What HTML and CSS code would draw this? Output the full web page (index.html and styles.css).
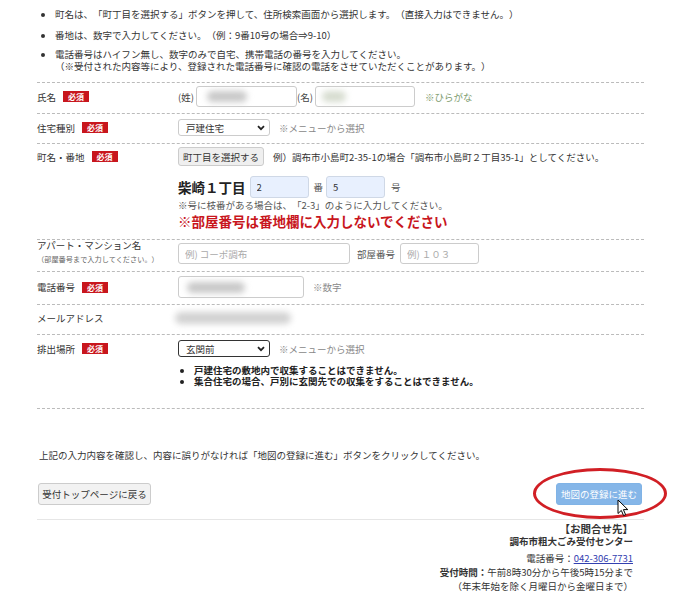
FILE: index.html
```html
<!DOCTYPE html>
<html lang="ja">
<head>
<meta charset="UTF-8">
<meta name="viewport" content="width=device-width, initial-scale=1.0">
<title>粗大ごみ受付 申込内容の入力</title>
<link rel="stylesheet" href="styles.css">
</head>
<body>
<div class="page">
  <ul class="notes">
    <li>町名は、「町丁目を選択する」ボタンを押して、住所検索画面から選択します。（直接入力はできません。）</li>
    <li>番地は、数字で入力してください。（例：9番10号の場合⇒9-10）</li>
    <li>電話番号はハイフン無し、数字のみで自宅、携帯電話の番号を入力してください。<br>（※受付された内容等により、登録された電話番号に確認の電話をさせていただくことがあります。）</li>
  </ul>

  <div class="form">
    <!-- 氏名 -->
    <div class="row row-name">
      <div class="label">氏名<span class="req">必須</span></div>
      <div class="field">
        <div class="line">
          <span class="pre">(姓)</span>
          <div class="input input-sei"><span class="blur blur-sei"></span></div>
          <span class="pre">(名)</span>
          <div class="input input-mei"><span class="blur blur-mei"></span></div>
          <span class="hint hint-green">※ひらがな</span>
        </div>
      </div>
    </div>

    <!-- 住宅種別 -->
    <div class="row row-select">
      <div class="label">住宅種別<span class="req">必須</span></div>
      <div class="field">
        <div class="line">
          <div class="select">
            <span>戸建住宅</span>
            <svg width="8" height="6" viewBox="0 0 8 6"><path d="M1 1.2 L4 4.2 L7 1.2" fill="none" stroke="#222" stroke-width="1.8"/></svg>
          </div>
          <span class="hint">※メニューから選択</span>
        </div>
      </div>
    </div>

    <!-- 町名・番地 -->
    <div class="row row-address">
      <div class="label">町名・番地<span class="req">必須</span></div>
      <div class="field">
        <div class="line">
          <button class="btn btn-town">町丁目を選択する</button>
          <span class="example">例）調布市小島町2-35-1の場合「調布市小島町２丁目35-1」としてください。</span>
        </div>
        <div class="line line-banchi">
          <span class="town">柴崎１丁目</span>
          <input class="input input-filled input-ban" type="text" value="2">
          <span class="unit">番</span>
          <input class="input input-filled input-go" type="text" value="5">
          <span class="unit">号</span>
        </div>
        <p class="sub-note">※号に枝番がある場合は、「2-3」のように入力してください。</p>
        <p class="warning">※部屋番号は番地欄に入力しないでください</p>
      </div>
    </div>

    <!-- アパート・マンション名 -->
    <div class="row row-apart">
      <div class="label label-apart">
        <span>アパート・マンション名</span>
        <small>（部屋番号まで入力してください。）</small>
      </div>
      <div class="field">
        <div class="line">
          <input class="input input-apart" type="text" placeholder="例) コーポ調布">
          <span class="room-label">部屋番号</span>
          <input class="input input-room" type="text" placeholder="例) １０３">
        </div>
      </div>
    </div>

    <!-- 電話番号 -->
    <div class="row row-tel">
      <div class="label">電話番号<span class="req">必須</span></div>
      <div class="field">
        <div class="line">
          <div class="input input-tel"><span class="blur blur-tel"></span></div>
          <span class="hint">※数字</span>
        </div>
      </div>
    </div>

    <!-- メールアドレス -->
    <div class="row row-mail">
      <div class="label">メールアドレス</div>
      <div class="field">
        <div class="line">
          <span class="blur blur-mail"></span>
        </div>
      </div>
    </div>

    <!-- 排出場所 -->
    <div class="row row-place">
      <div class="label">排出場所<span class="req">必須</span></div>
      <div class="field">
        <div class="line">
          <div class="select select-focus">
            <span>玄関前</span>
            <svg width="8" height="6" viewBox="0 0 8 6"><path d="M1 1.2 L4 4.2 L7 1.2" fill="none" stroke="#222" stroke-width="1.8"/></svg>
          </div>
          <span class="hint">※メニューから選択</span>
        </div>
        <ul class="place-notes">
          <li>戸建住宅の敷地内で収集することはできません。</li>
          <li>集合住宅の場合、戸別に玄関先での収集をすることはできません。</li>
        </ul>
      </div>
    </div>
  </div>

  <p class="confirm">上記の入力内容を確認し、内容に誤りがなければ「地図の登録に進む」ボタンをクリックしてください。</p>

  <div class="actions">
    <button class="btn btn-back">受付トップページに戻る</button>
    <div class="next-wrap">
      <button class="btn btn-next">地図の登録に進む</button>
      <span class="circle-mark"></span>
      <svg class="cursor" width="12" height="18" viewBox="0 0 12 18">
        <path d="M1 1 L1 14.5 L4.3 11.4 L6.6 16.6 L8.6 15.7 L6.4 10.6 L10.8 10.6 Z" fill="#fff" stroke="#000" stroke-width="1" stroke-linejoin="round"/>
      </svg>
    </div>
  </div>

  <div class="contact">
    <p class="contact-title">【お問合せ先】</p>
    <p class="contact-name">調布市粗大ごみ受付センター</p>
    <p class="contact-tel">電話番号：<a href="#">042-306-7731</a></p>
    <p><b>受付時間：</b>午前8時30分から午後5時15分まで</p>
    <p>（年末年始を除く月曜日から金曜日まで）</p>
  </div>
</div>
</body>
</html>
```

FILE: styles.css
```css
body {
  margin: 0;
  background-color: #fff;
  color: #333;
  font-family: "Noto Sans CJK JP", "Noto Sans", sans-serif;
  font-size: 9.5px;
  text-spacing-trim: space-all;
}

p {
  margin: 0;
}

.page {
  width: 607px;
  margin-left: 37px;
}

/* top notes */
.notes {
  margin: 0;
  padding: 8px 0 0 18px;
  line-height: 12px;
}

.notes li + li {
  margin-top: 9px;
}

.notes li:last-child {
  margin-top: 8px;
  line-height: 11.5px;
}

/* form rows */
.form {
  margin-top: 10px;
  border-bottom: 1px dashed #bbb;
}

.row {
  display: flex;
  border-top: 1px dashed #bbb;
}

.label {
  width: 141px;
  flex: none;
  display: flex;
  align-items: center;
  color: #333;
}

.req {
  display: inline-block;
  margin-left: 7px;
  padding: 0 5px;
  height: 11px;
  line-height: 11px;
  background-color: #c8161d;
  color: #fff;
  font-size: 8px;
  font-weight: bold;
}

.field {
  flex: 1;
}

.line {
  display: flex;
  align-items: center;
  white-space: nowrap;
}

.input {
  box-sizing: border-box;
  height: 21px;
  margin: 0;
  padding: 0 6px;
  border: 1px solid #ccc;
  border-radius: 3px;
  background-color: #fff;
  font-family: inherit;
  font-size: 9.5px;
  color: #333;
  display: flex;
  align-items: center;
}

.input::placeholder {
  color: #aaa;
}

.input-filled {
  height: 22px;
  background-color: #e8f0fe;
  border-color: #cfd8e6;
}

.blur {
  display: block;
  height: 11px;
  border-radius: 6px;
  background-color: #c8c8c8;
  filter: blur(3px);
}

.pre {
  padding-right: 2px;
  color: #444;
}

.hint {
  margin-left: 9px;
  color: #888;
}

.hint-green {
  margin-left: 10px;
  color: #7c9a6c;
}

/* row: 氏名 */
.row-name {
  padding: 3px 0 6px;
}

.row-name .label {
  height: 21px;
}

.input-sei {
  width: 101px;
}

.input-mei {
  width: 100px;
}

.blur-sei {
  width: 40px;
  margin-left: 4px;
}

.blur-mei {
  width: 24px;
  background-color: #d6dccf;
}

/* row: select */
.select {
  box-sizing: border-box;
  width: 92px;
  height: 17px;
  padding: 0 4px 0 7px;
  border: 1px solid #ccc;
  border-radius: 3px;
  display: flex;
  align-items: center;
  justify-content: space-between;
  color: #333;
}

.select-focus {
  border: 1.5px solid #333;
}

.row-select {
  padding: 5px 0 7px;
}

.row-select .label {
  height: 17px;
}

/* row: 町名・番地 */
.row-address {
  padding: 3px 0 8px;
}

.row-address .label {
  height: 19px;
}

.btn {
  box-sizing: border-box;
  margin: 0;
  padding: 0;
  border: 1px solid #ccc;
  border-radius: 3px;
  background-color: #efefef;
  color: #333;
  font-family: inherit;
  font-size: 9.5px;
  white-space: nowrap;
  cursor: pointer;
}

.btn-town {
  width: 86px;
  height: 19px;
}

.example {
  margin-left: 9px;
}

.line-banchi {
  margin-top: 10px;
}

.town {
  font-size: 13.5px;
  font-weight: bold;
  color: #222;
  line-height: 22px;
  margin-right: 4px;
}

.input-ban {
  width: 59px;
}

.input-go {
  width: 59px;
}

.unit {
  margin: 0 4px 0 6px;
  color: #555;
}

.input-ban + .unit {
  margin: 0 3px 0 5px;
}

.sub-note {
  margin-top: 1px;
  line-height: 13px;
  color: #555;
}

.warning {
  line-height: 19px;
  font-size: 13.5px;
  font-weight: bold;
  color: #c8161d;
}

/* row: アパート */
.row-apart {
  padding: 3px 0 5px;
}

.label-apart {
  flex-direction: column;
  align-items: flex-start;
  margin-top: -4px;
}

.label-apart span {
  line-height: 13px;
  color: #333;
}

.label-apart small {
  font-size: 7.2px;
  line-height: 14px;
  color: #666;
}

.input-apart {
  width: 172px;
}

.room-label {
  margin: 0 5px 0 7px;
  color: #555;
}

.input-room {
  width: 79px;
}

/* row: 電話番号 */
.row-tel {
  padding: 4px 0 6px;
}

.row-tel .label {
  height: 22px;
}

.input-tel {
  width: 126px;
  height: 22px;
}

.blur-tel {
  width: 58px;
  margin-left: 2px;
}

/* row: メールアドレス */
.row-mail {
  padding: 3px 0 6px;
}

.row-mail .label,
.row-mail .line {
  height: 20px;
}

.blur-mail {
  width: 116px;
  height: 12px;
  margin-left: -3px;
  background-color: #d2d2d2;
}

/* row: 排出場所 */
.row-place {
  padding: 5px 0 21px;
}

.row-place .label {
  height: 17px;
}

.place-notes {
  margin: 7px 0 0;
  padding-left: 16px;
  line-height: 12px;
  font-weight: bold;
  color: #222;
}

.place-notes li + li {
  margin-top: -1px;
}

/* bottom */
.confirm {
  margin-top: 39px;
  line-height: 14px;
  padding-left: 2px;
}

.actions {
  margin-top: 21px;
  padding: 0 2px 14px 1px;
  display: flex;
  justify-content: space-between;
  border-bottom: 1px solid #e6e6e6;
}

.btn-back {
  width: 113px;
  height: 22px;
  background-color: #f2f2f2;
}

.next-wrap {
  position: relative;
}

.btn-next {
  width: 86px;
  height: 22px;
  border-color: #80b3e6;
  background-color: #85b6e8;
  color: #fff;
}

.circle-mark {
  position: absolute;
  left: -23px;
  top: -15px;
  box-sizing: border-box;
  width: 134px;
  height: 51px;
  border: 3px solid #d11f25;
  border-radius: 50%;
}

.cursor {
  position: absolute;
  left: 61px;
  top: 16px;
}

/* contact */
.contact {
  margin-top: 3px;
  padding-right: 11px;
  text-align: right;
  line-height: 14px;
  color: #333;
}

.contact-title {
  line-height: 12px;
  font-size: 10.5px;
  font-weight: bold;
}

.contact-name {
  line-height: 13px;
  font-weight: bold;
}

.contact-tel {
  margin-top: 3px;
}

.contact-tel a {
  color: #3340b0;
}
```
